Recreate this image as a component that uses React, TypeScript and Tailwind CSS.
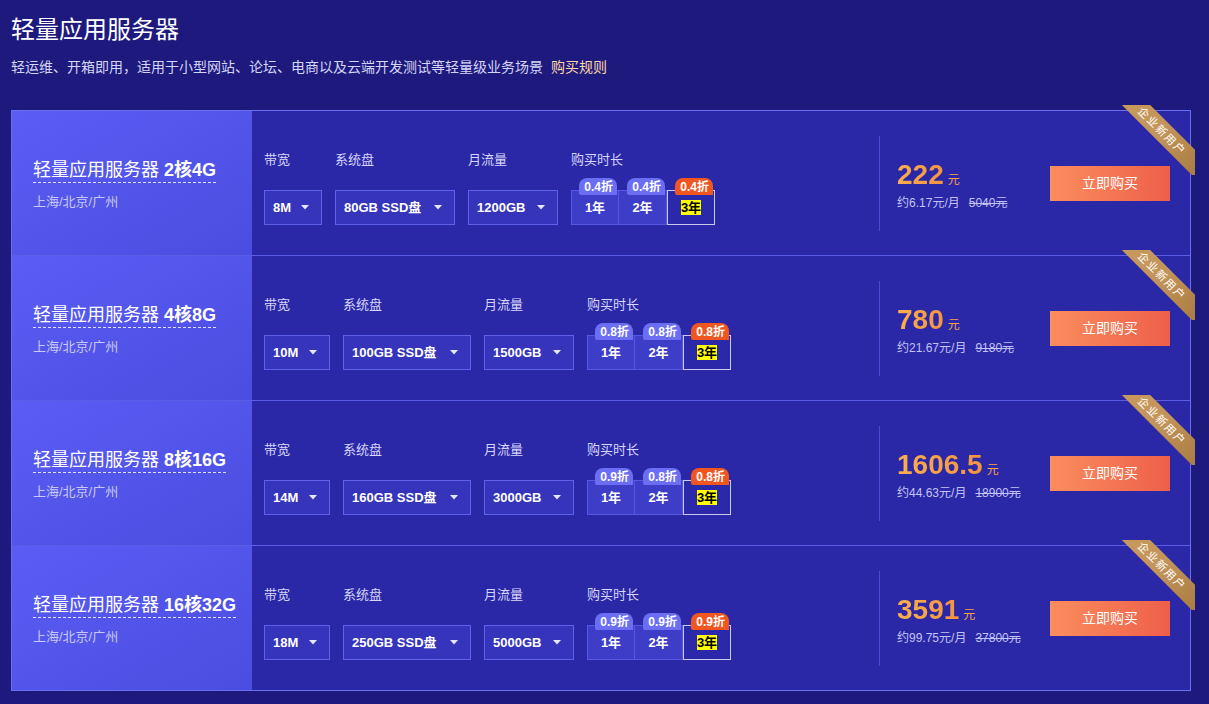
type Plan = {
  spec: string;
  bw: string;
  disk: string;
  traffic: string;
  bwW: string;
  diskW: string;
  trafficW: string;
  discounts: string[];
  price: string;
  monthly: string;
  original: string;
};

const plans: Plan[] = [
  {
    spec: '2核4G',
    bw: '8M',
    disk: '80GB SSD盘',
    traffic: '1200GB',
    bwW: 'w-[58px]',
    diskW: 'w-[120px]',
    trafficW: 'w-[90px]',
    discounts: ['0.4折', '0.4折', '0.4折'],
    price: '222',
    monthly: '6.17',
    original: '5040',
  },
  {
    spec: '4核8G',
    bw: '10M',
    disk: '100GB SSD盘',
    traffic: '1500GB',
    bwW: 'w-[66px]',
    diskW: 'w-[128px]',
    trafficW: 'w-[90px]',
    discounts: ['0.8折', '0.8折', '0.8折'],
    price: '780',
    monthly: '21.67',
    original: '9180',
  },
  {
    spec: '8核16G',
    bw: '14M',
    disk: '160GB SSD盘',
    traffic: '3000GB',
    bwW: 'w-[66px]',
    diskW: 'w-[128px]',
    trafficW: 'w-[90px]',
    discounts: ['0.9折', '0.8折', '0.8折'],
    price: '1606.5',
    monthly: '44.63',
    original: '18900',
  },
  {
    spec: '16核32G',
    bw: '18M',
    disk: '250GB SSD盘',
    traffic: '5000GB',
    bwW: 'w-[66px]',
    diskW: 'w-[128px]',
    trafficW: 'w-[90px]',
    discounts: ['0.9折', '0.9折', '0.9折'],
    price: '3591',
    monthly: '99.75',
    original: '37800',
  },
];

function Caret() {
  return (
    <svg width="8" height="5" viewBox="0 0 8 5" className="shrink-0">
      <path d="M0 0 L8 0 L4 4.5 Z" fill="#e6e6ff" />
    </svg>
  );
}

function Select({ value, width }: { value: string; width: string }) {
  return (
    <div
      className={`${width} h-[35px] flex items-center justify-between pl-[8px] pr-[12px] border border-[#5f62e8] bg-[#3634bb] text-[13px] font-bold text-white`}
    >
      <span>{value}</span>
      <Caret />
    </div>
  );
}

function Field({ label, children }: { label: string; children: React.ReactNode }) {
  return (
    <div className="flex flex-col">
      <div className="text-[13px] leading-[16px] text-[#d6d6f8] mb-[22px]">{label}</div>
      {children}
    </div>
  );
}

function Duration({ discounts }: { discounts: string[] }) {
  const years = ['1年', '2年', '3年'];
  return (
    <div className="flex">
      {years.map((y, i) => {
        const selected = i === 2;
        let box = 'relative w-[48px] h-[35px] flex items-center justify-center border ';
        if (selected) box += 'border-[#c9c9f0] bg-[#2b29a9]';
        else if (i === 1) box += 'border-[#5659e0] border-l-0 bg-[#3d3dc8]';
        else box += 'border-[#5659e0] bg-[#3d3dc8]';
        return (
          <div key={y} className={box}>
            <span
              className={
                selected
                  ? 'text-[13px] leading-[15px] font-bold text-black bg-[#ffff00]'
                  : 'text-[13px] font-bold text-white'
              }
            >
              {y}
            </span>
            <div
              className={`absolute top-[-13px] right-[1px] h-[17px] pl-[5px] pr-[4px] rounded-t-[8px] rounded-bl-[2px] flex items-center text-[12px] font-bold text-white ${
                selected ? 'bg-[#f0561f]' : 'bg-[#6b6df3]'
              }`}
            >
              {discounts[i]}
            </div>
          </div>
        );
      })}
    </div>
  );
}

function Ribbon() {
  return (
    <div className="absolute top-[-6px] right-[-5px] w-[80px] h-[70px] overflow-hidden z-10 pointer-events-none">
      <div className="absolute left-[-13px] top-[16px] w-[120px] h-[20px] rotate-45 bg-gradient-to-r from-[#c99b5c] via-[#c3945a] to-[#a97a40] flex items-center justify-center text-[11px] text-white tracking-[1.5px]">
        企业新用户
      </div>
    </div>
  );
}

function PlanRow({ plan, last }: { plan: Plan; last: boolean }) {
  return (
    <div className={`relative flex ${last ? 'h-[144px]' : 'h-[145px] border-b border-[#5b5ee4]'}`}>
      <Ribbon />
      {/* name */}
      <div className="w-[240px] shrink-0 bg-gradient-to-br from-[#5a5df4] to-[#4b4de0] flex flex-col justify-center pl-[21px] pt-[4px]">
        <div>
          <span className="inline-block text-[18px] leading-[22px] text-white border-b border-dashed border-[#e0e0ff] pb-[1px]">
            轻量应用服务器 <span className="font-bold">{plan.spec}</span>
          </span>
        </div>
        <div className="mt-[9px] text-[13px] text-[#c9c9f5]">上海/北京/广州</div>
      </div>

      {/* config */}
      <div className="flex-1 flex items-center bg-[#2a28a7]">
        <div className="w-[627px] h-full pl-[12px] pt-[41px] flex gap-[13px]">
          <Field label="带宽">
            <Select value={plan.bw} width={plan.bwW} />
          </Field>
          <Field label="系统盘">
            <Select value={plan.disk} width={plan.diskW} />
          </Field>
          <Field label="月流量">
            <Select value={plan.traffic} width={plan.trafficW} />
          </Field>
          <Field label="购买时长">
            <Duration discounts={plan.discounts} />
          </Field>
        </div>

        <div className="w-px h-[95px] bg-[#4a4ad2]" />

        <div className="w-[170px] pl-[17px] flex flex-col pt-[5px]">
          <div className="flex items-end">
            <span className="text-[28px] leading-[30px] font-bold bg-gradient-to-r from-[#fbae50] to-[#f39340] bg-clip-text text-transparent">
              {plan.price}
            </span>
            <span className="ml-[4px] mb-[1px] text-[12px] text-[#f7a14a]">元</span>
          </div>
          <div className="mt-[4px] text-[12px] text-[#c3c3f3] whitespace-nowrap">
            约{plan.monthly}元/月
            <span className="ml-[9px] line-through">{plan.original}元</span>
          </div>
        </div>

        <button className="w-[120px] h-[35px] bg-gradient-to-r from-[#fb8d5e] to-[#ee5e4a] text-white text-[14px] shrink-0">
          立即购买
        </button>
      </div>
    </div>
  );
}

export default function App() {
  return (
    <div className="min-h-[704px] w-full bg-[#1e1a7d] pl-[11px] pr-[18px] pt-[14px] pb-[13px] font-['Liberation_Sans','Noto_Sans_CJK_SC',sans-serif]">
      <h1 className="text-[24px] leading-[32px] text-white">轻量应用服务器</h1>
      <p className="mt-[11px] text-[14px] leading-[20px] text-[#d5d5f5]">
        轻运维、开箱即用，适用于小型网站、论坛、电商以及云端开发测试等轻量级业务场景
        <span className="ml-[8px] text-[#ffd6a6]">购买规则</span>
      </p>

      <div className="mt-[33px] border border-[#6c6ef0]">
        {plans.map((p, i) => (
          <PlanRow key={p.spec} plan={p} last={i === plans.length - 1} />
        ))}
      </div>
    </div>
  );
}
